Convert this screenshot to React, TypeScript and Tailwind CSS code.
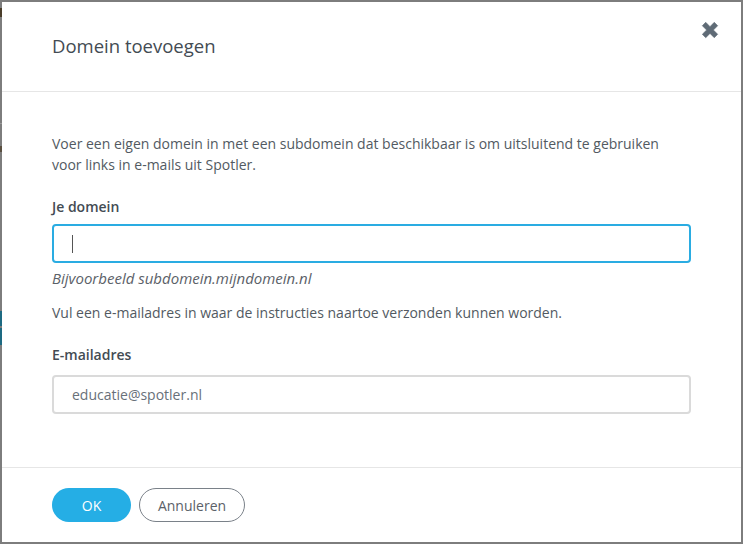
import React from "react";

function CloseIcon() {
  return (
    <svg width="18" height="18" viewBox="0 0 16 16" aria-hidden="true">
      <path
        d="M1.2 4.2 L4.2 1.2 L8 5 L11.8 1.2 L14.8 4.2 L11 8 L14.8 11.8 L11.8 14.8 L8 11 L4.2 14.8 L1.2 11.8 L5 8 Z"
        fill="#5f6b76"
        stroke="#5f6b76"
        strokeWidth="0.6"
        strokeLinejoin="round"
      />
    </svg>
  );
}

export default function App() {
  return (
    <div
      className="relative h-[544px] w-[743px] overflow-hidden bg-[#7d7d7d] pt-[2px] pl-[2px] pr-[2px] pb-[2px]"
      style={{ fontFamily: "'Open Sans', 'Noto Sans', sans-serif" }}
    >
      {/* glimpses of the page behind the overlay */}
      <span className="absolute left-0 top-[8px] h-[9px] w-[2px] bg-[#4a3d2a]" />
      <span className="absolute left-0 top-[123px] h-[1px] w-[2px] bg-[#9a9a9a]" />
      <span className="absolute left-0 top-[146px] h-[6px] w-[2px] bg-[#5a4f40]" />
      <span className="absolute left-0 top-[311px] h-[15px] w-[2px] bg-[#1d6a82]" />
      <span className="absolute left-0 top-[328px] h-[17px] w-[2px] bg-[#1d6a82]" />

      <div className="relative flex h-full w-full flex-col bg-white">
        <button className="absolute right-[22px] top-[19px]" aria-label="Sluiten">
          <CloseIcon />
        </button>

        <div className="flex h-[90px] items-center border-b border-[#e6e6e6] px-[50px] pb-[2px]">
          <h2 className="text-[18.5px] leading-[24px] text-[#434b53]">Domein toevoegen</h2>
        </div>

        <div className="flex-1 px-[50px] pt-[41px] text-[14px] text-[#525a62]">
          <p className="leading-[21px]">
            Voer een eigen domein in met een subdomein dat beschikbaar is om uitsluitend te gebruiken
            <br />
            voor links in e-mails uit Spotler.
          </p>

          <label className="mt-[22px] block text-[14px] font-semibold leading-[20px] text-[#434b53]">
            Je domein
          </label>
          <div className="mt-[7px] flex h-[39px] w-[639px] items-center rounded-[4px] border-2 border-[#2aace2] px-[18px]">
            <span className="block h-[18px] w-[1px] bg-[#555]" />
          </div>
          <p className="mt-[5px] text-[15px] italic leading-[20px] text-[#5b6168]">
            Bijvoorbeeld subdomein.mijndomein.nl
          </p>

          <p className="mt-[15px] leading-[20px]">
            Vul een e-mailadres in waar de instructies naartoe verzonden kunnen worden.
          </p>

          <label className="mt-[22px] block font-semibold leading-[20px] text-[#434b53]">
            E-mailadres
          </label>
          <div className="mt-[10px] flex h-[39px] w-[639px] items-center rounded-[4px] border-2 border-[#dadada] px-[18px] text-[#687079]">
            educatie@spotler.nl
          </div>
        </div>

        <div className="flex h-[75px] items-start gap-[8px] border-t border-[#e6e6e6] px-[50px] pt-[20px]">
          <button className="h-[34px] w-[79px] rounded-full bg-[#25aee5] text-[14px] text-white">
            OK
          </button>
          <button className="h-[34px] w-[106px] rounded-full border border-[#7a8189] text-[14px] text-[#5b6168]">
            Annuleren
          </button>
        </div>
      </div>
    </div>
  );
}
